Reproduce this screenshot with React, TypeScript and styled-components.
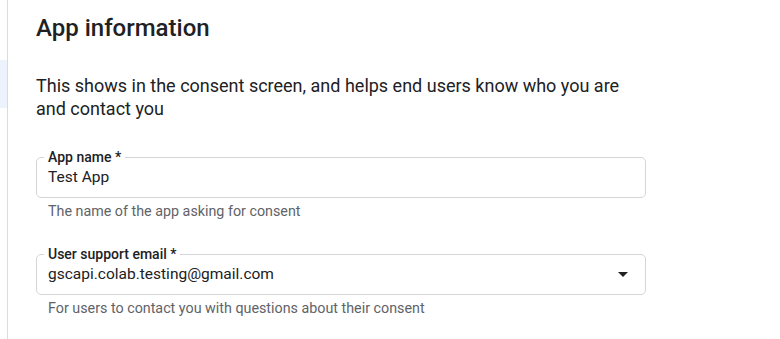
import React from 'react';
import styled, { createGlobalStyle } from 'styled-components';

const GlobalStyle = createGlobalStyle`
  html, body {
    margin: 0;
    padding: 0;
    background: #fff;
  }
  body {
    font-family: Roboto, 'Liberation Sans', Arial, sans-serif;
    color: #202124;
    -webkit-font-smoothing: antialiased;
  }
`;

function ArrowDropDown() {
  return (
    <svg width="24" height="24" viewBox="0 0 24 24" aria-hidden="true">
      <path d="M7 10l5 5 5-5z" fill="#202124" />
    </svg>
  );
}

function App() {
  return (
    <>
      <GlobalStyle />
      <Page>
        <Sidebar>
          <NavItem $active={false} />
          <NavItem $active />
        </Sidebar>

        <Main>
          <Title>App information</Title>
          <Intro>
            This shows in the consent screen, and helps end users know who you are
            and contact you
          </Intro>

          <Field>
            <Outline>
              <Label>App name *</Label>
              <Value>Test App</Value>
            </Outline>
            <Hint>The name of the app asking for consent</Hint>
          </Field>

          <Field>
            <Outline>
              <Label>User support email *</Label>
              <SelectRow>
                <Value>gscapi.colab.testing@gmail.com</Value>
                <ArrowDropDown />
              </SelectRow>
            </Outline>
            <Hint>For users to contact you with questions about their consent</Hint>
          </Field>
        </Main>
      </Page>
    </>
  );
}

const Page = styled.div`
  display: flex;
  height: 339px;
  overflow: hidden;
`;

const Sidebar = styled.nav`
  width: 7px;
  flex-shrink: 0;
  border-right: 1px solid #dadce0;
  display: flex;
  flex-direction: column;
`;

const NavItem = styled.div<{ $active: boolean }>`
  height: 48px;
  margin-top: ${(p) => (p.$active ? '0' : '12px')};
  background: ${(p) => (p.$active ? '#edf3fd' : 'transparent')};
`;

const Main = styled.main`
  flex: 1;
  padding: 12px 0 0 28px;
  max-width: 610px;
`;

const Title = styled.h1`
  margin: 0;
  font-size: 24px;
  line-height: 32px;
  font-weight: 500;
  color: #202124;
`;

const Intro = styled.p`
  margin: 30px 0 0;
  max-width: 596px;
  font-size: 18px;
  line-height: 23px;
  color: #202124;
`;

const Field = styled.div`
  margin-top: 29px;
  & + & {
    margin-top: 26px;
  }
`;

const Outline = styled.fieldset`
  margin: 0;
  padding: 2px 11px 10px;
  border: 1px solid #d3d5d8;
  border-radius: 5px;
  min-width: 0;
`;

const Label = styled.legend`
  margin-left: -4px;
  padding: 0 4px;
  font-size: 14px;
  line-height: 16px;
  font-weight: 500;
  color: #202124;
`;

const Value = styled.div`
  font-size: 15.5px;
  line-height: 20px;
  color: #202124;
`;

const SelectRow = styled.div`
  display: flex;
  align-items: center;
  justify-content: space-between;
  margin-right: -1px;
  height: 20px;
`;

const Hint = styled.div`
  padding: 4px 0 0 12px;
  font-size: 14.3px;
  line-height: 18px;
  color: #5f6368;
`;

export default App;
